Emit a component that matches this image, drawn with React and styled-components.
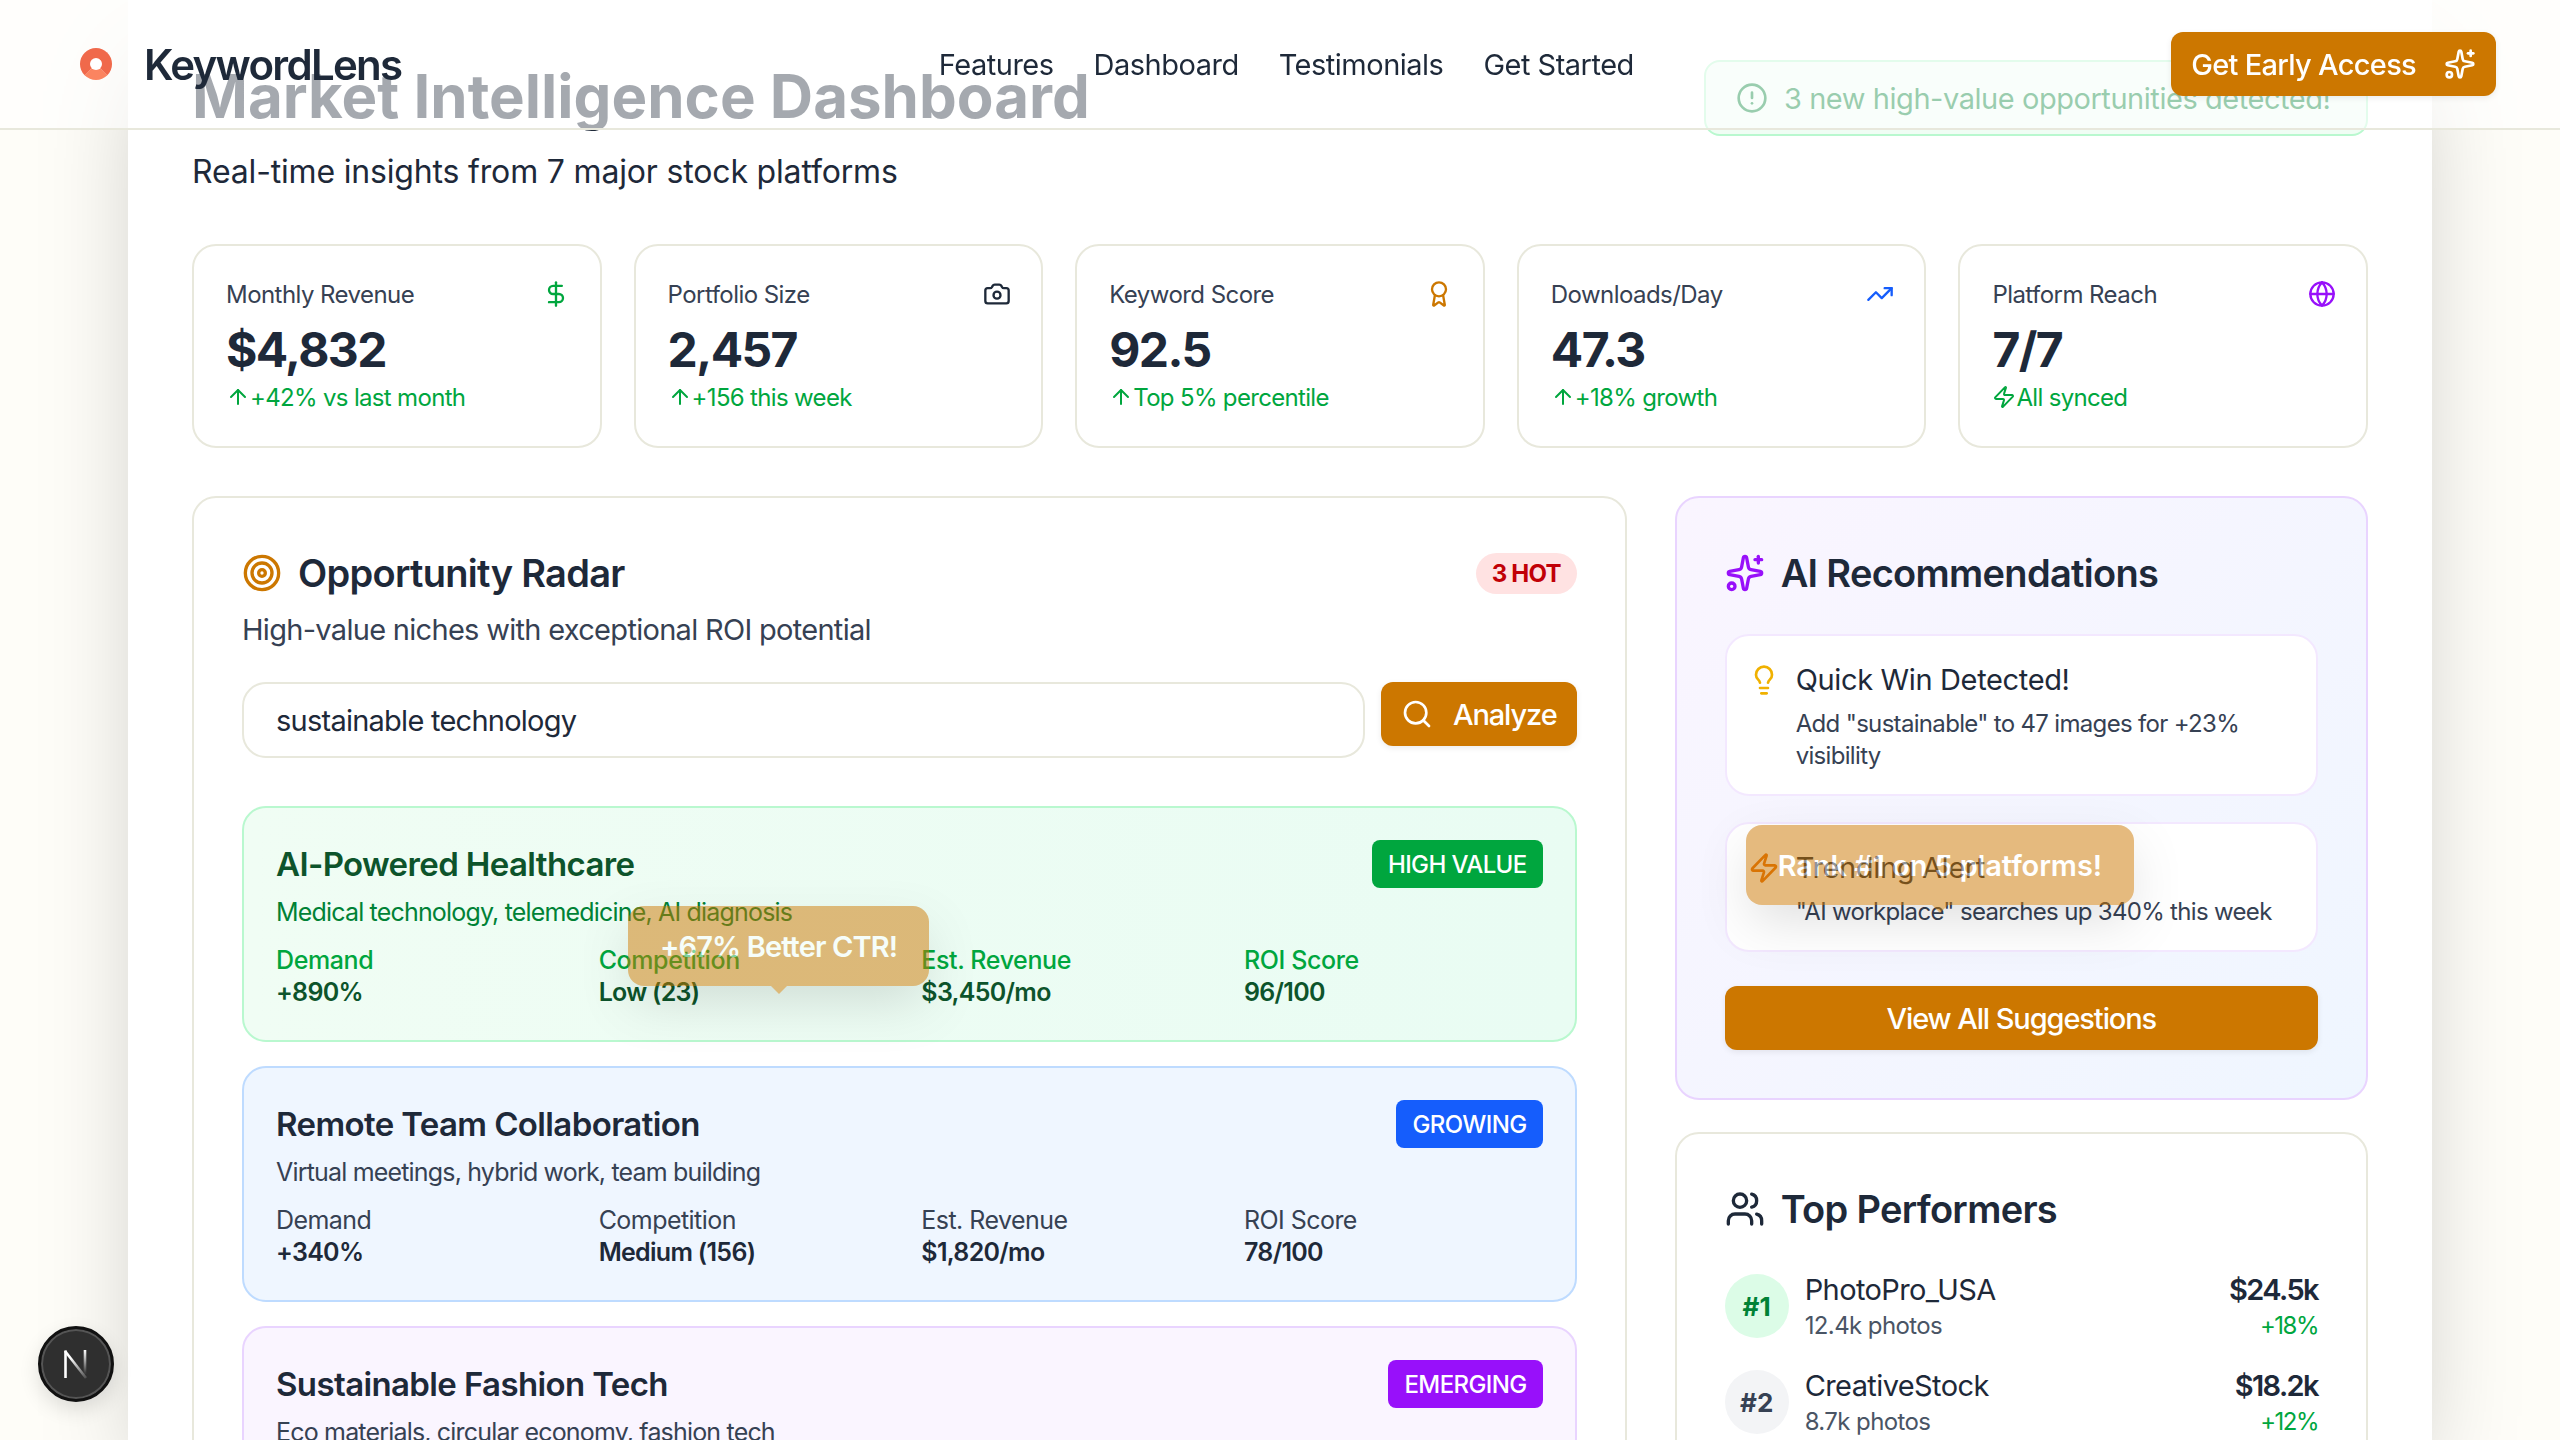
import styled, { createGlobalStyle } from "styled-components";
import {
  ArrowUp,
  Award,
  Camera,
  CircleAlert,
  DollarSign,
  Globe,
  Lightbulb,
  Search,
  Sparkles,
  Target,
  TrendingUp,
  Users,
  Zap,
} from "lucide-react";

const GlobalStyle = createGlobalStyle`
  * { box-sizing: border-box; }
  html, body { margin: 0; height: 100%; }
  body {
    background: #fefdf8;
    color: #1e2939;
    font-family: Inter, "Noto Sans", sans-serif;
    overflow: hidden;
  }
`;

const amber = "#cc7700";

const stats = [
  { label: "Monthly Revenue", value: "$4,832", change: "+42% vs last month", Icon: DollarSign, color: "#00a63e" },
  { label: "Portfolio Size", value: "2,457", change: "+156 this week", Icon: Camera, color: "#1e2939" },
  { label: "Keyword Score", value: "92.5", change: "Top 5% percentile", Icon: Award, color: amber },
  { label: "Downloads/Day", value: "47.3", change: "+18% growth", Icon: TrendingUp, color: "#155dfc" },
  { label: "Platform Reach", value: "7/7", change: "All synced", Icon: Globe, color: "#9810fa", ChangeIcon: Zap },
];

const tones = {
  green: { bg: "linear-gradient(to right, #f0fdf4, #e9fcf3)", border: "#b9f8cf", title: "#0d542b", desc: "#008236", label: "#00a63e", value: "#0d542b", badge: "#00a63e" },
  blue: { bg: "#eff6ff", border: "#bedbff", title: "#1e2939", desc: "#364153", label: "#364153", value: "#1e2939", badge: "#155dfc" },
  purple: { bg: "#faf5ff", border: "#e9d4ff", title: "#1e2939", desc: "#364153", label: "#364153", value: "#1e2939", badge: "#9810fa" },
};

const niches = [
  {
    tone: "green",
    title: "AI-Powered Healthcare",
    badge: "HIGH VALUE",
    desc: "Medical technology, telemedicine, AI diagnosis",
    metrics: [["Demand", "+890%"], ["Competition", "Low (23)"], ["Est. Revenue", "$3,450/mo"], ["ROI Score", "96/100"]],
    tip: "+67% Better CTR!",
  },
  {
    tone: "blue",
    title: "Remote Team Collaboration",
    badge: "GROWING",
    desc: "Virtual meetings, hybrid work, team building",
    metrics: [["Demand", "+340%"], ["Competition", "Medium (156)"], ["Est. Revenue", "$1,820/mo"], ["ROI Score", "78/100"]],
  },
  {
    tone: "purple",
    title: "Sustainable Fashion Tech",
    badge: "EMERGING",
    desc: "Eco materials, circular economy, fashion tech",
    metrics: [],
  },
];

const performers = [
  { rank: "#1", name: "PhotoPro_USA", photos: "12.4k photos", money: "$24.5k", growth: "+18%", top: true },
  { rank: "#2", name: "CreativeStock", photos: "8.7k photos", money: "$18.2k", growth: "+12%" },
];

const Nav = styled.nav`
  position: fixed;
  top: 0;
  left: 0;
  right: 0;
  z-index: 20;
  height: 130px;
  padding: 0 64px 0 80px;
  display: flex;
  align-items: center;
  justify-content: space-between;
  background: rgba(255, 255, 255, 0.6);
  border-bottom: 2px solid #e8e8dc;
`;

const Brand = styled.div`
  display: flex;
  align-items: center;
  gap: 32px;
  font-size: 42px;
  font-weight: 600;
  letter-spacing: -1.7px;
  color: #1e2939;
`;

const LogoMark = styled.span`
  width: 32px;
  height: 32px;
  border-radius: 50%;
  border: 10px solid #f0694b;
  border-bottom-color: #fb8460;
  background: #fff;
`;

const NavLinks = styled.div`
  display: flex;
  gap: 40px;
  font-size: 29px;
  letter-spacing: -0.5px;
  color: #1e2939;
`;

const PrimaryButton = styled.button`
  display: flex;
  align-items: center;
  justify-content: center;
  gap: ${({ $gap }) => $gap || 20}px;
  height: 64px;
  width: ${({ $full }) => ($full ? "100%" : "auto")};
  margin-top: ${({ $mt }) => $mt || 0}px;
  padding: 0 20px;
  border: 0;
  border-radius: 12px;
  background: ${amber};
  color: #fff;
  font-family: inherit;
  font-size: 29px;
  font-weight: 500;
  letter-spacing: ${({ $spacing }) => $spacing ?? -1.1}px;
  box-shadow: 0 2px 6px rgba(0, 0, 0, 0.08);
  flex-shrink: 0;
`;

const Page = styled.main`
  width: 2304px;
  height: 100vh;
  margin: 0 auto;
  padding: 60px 64px 0;
  background: #fff;
  box-shadow: 0 50px 100px -24px rgba(0, 0, 0, 0.25);
  overflow: hidden;
`;

const Header = styled.header`
  display: flex;
  justify-content: space-between;
  align-items: flex-start;
  margin-bottom: 48px;
`;

const Title = styled.h1`
  margin: 0;
  font-size: 60px;
  line-height: 72px;
  font-weight: 700;
  color: #1e2939;
`;

const Subtitle = styled.p`
  margin: 16px 0 0;
  font-size: 32px;
  line-height: 48px;
  letter-spacing: -0.17px;
  color: #1e2939;
`;

const Alert = styled.div`
  display: flex;
  align-items: center;
  gap: 16px;
  width: 664px;
  height: 76px;
  padding: 0 32px 0 30px;
  border: 2px solid #b9f8cf;
  border-radius: 16px;
  background: #f0fdf4;
  color: #008236;
  font-size: 29px;
  letter-spacing: -0.45px;
  white-space: nowrap;
`;

const StatsGrid = styled.section`
  display: grid;
  grid-template-columns: repeat(5, 1fr);
  gap: 32px;
  margin-bottom: 48px;
`;

const StatCard = styled.article`
  height: 204px;
  padding: 28px 30px 0 32px;
  border: 2px solid #e8e8dc;
  border-radius: 24px;
  background: #fff;
`;

const StatTop = styled.div`
  display: flex;
  align-items: center;
  justify-content: space-between;
  height: 40px;
  font-size: 24px;
  letter-spacing: -0.55px;
  color: #364153;
`;

const StatValue = styled.div`
  margin-top: 8px;
  font-size: 48px;
  line-height: 56px;
  font-weight: 700;
  letter-spacing: -1.6px;
  color: #1e2939;
`;

const StatChange = styled.div`
  display: flex;
  align-items: center;
  margin-top: 3px;
  height: 32px;
  font-size: 24px;
  letter-spacing: -0.67px;
  color: #00a63e;
`;

const Columns = styled.div`
  display: grid;
  grid-template-columns: repeat(3, 1fr);
  gap: 48px;
  align-items: start;
`;

const Panel = styled.section`
  grid-column: span ${({ $span }) => $span || 1};
  padding: 48px;
  border: 2px solid #e8e8dc;
  border-radius: 24px;
  background: #fff;
`;

const SidePanel = styled(Panel)`
  border-color: #e9d4ff;
  background: linear-gradient(135deg, #faf5ff, #eff6ff);
`;

const SideColumn = styled.div`
  display: flex;
  flex-direction: column;
  gap: 32px;
`;

const PanelHeader = styled.div`
  display: flex;
  align-items: center;
  justify-content: space-between;
  height: 54px;
  margin-bottom: ${({ $mb }) => $mb || 0}px;
`;

const PanelTitle = styled.h2`
  display: flex;
  align-items: center;
  gap: 16px;
  margin: 0;
  font-size: 38px;
  font-weight: 600;
  letter-spacing: -0.7px;
  color: #1e2939;
`;

const HotBadge = styled.span`
  display: flex;
  align-items: center;
  height: 41px;
  padding: 0 16px;
  border-radius: 21px;
  background: #ffe2e2;
  color: #c10007;
  font-size: 24px;
  font-weight: 700;
  letter-spacing: -0.8px;
`;

const PanelSub = styled.p`
  margin: 6px 0 28px;
  font-size: 29px;
  line-height: 48px;
  letter-spacing: -0.7px;
  color: #364153;
`;

const SearchRow = styled.div`
  display: flex;
  align-items: flex-start;
  gap: 16px;
  margin-bottom: 48px;
`;

const SearchInput = styled.input`
  flex: 1;
  height: 76px;
  padding: 0 32px;
  border: 2px solid #e8e8dc;
  border-radius: 24px;
  outline: none;
  background: #fff;
  color: #1e2939;
  font-family: inherit;
  font-size: 29px;
  letter-spacing: -0.75px;
`;

const NicheList = styled.div`
  display: flex;
  flex-direction: column;
  gap: 24px;
`;

const NicheCard = styled.article`
  position: relative;
  padding: 32px;
  min-height: 236px;
  border: 2px solid ${({ $tone }) => tones[$tone].border};
  border-radius: 24px;
  background: ${({ $tone }) => tones[$tone].bg};
`;

const NicheHead = styled.div`
  display: flex;
  align-items: center;
  justify-content: space-between;
  height: 48px;
`;

const NicheTitle = styled.h3`
  margin: 0;
  font-size: 33px;
  font-weight: 600;
  letter-spacing: -0.62px;
  color: ${({ $tone }) => tones[$tone].title};
`;

const NicheBadge = styled.span`
  display: flex;
  align-items: center;
  height: 48px;
  padding: 0 16px;
  border-radius: 8px;
  background: ${({ $tone }) => tones[$tone].badge};
  color: #fff;
  font-size: 24px;
  font-weight: 500;
  letter-spacing: -0.6px;
`;

const NicheDesc = styled.p`
  margin: 6px 0 14px;
  font-size: 25px;
  line-height: 36px;
  letter-spacing: -0.82px;
  color: ${({ $tone }) => tones[$tone].desc};
`;

const Metrics = styled.div`
  display: grid;
  grid-template-columns: repeat(4, 1fr);
  gap: 24px;
`;

const MetricLabel = styled.div`
  font-size: 25px;
  line-height: 32px;
  font-weight: ${({ $tone }) => ($tone === "green" ? 500 : 400)};
  letter-spacing: ${({ $tone }) => ($tone === "green" ? -0.4 : -0.55)}px;
  color: ${({ $tone }) => tones[$tone].label};
`;

const MetricValue = styled.div`
  font-size: 25px;
  line-height: 32px;
  font-weight: 600;
  letter-spacing: -0.7px;
  color: ${({ $tone }) => tones[$tone].value};
`;

const Tip = styled.div`
  position: absolute;
  left: ${({ $left }) => $left}px;
  top: ${({ $top }) => $top}px;
  z-index: 5;
  height: 80px;
  padding: 0 32px;
  display: flex;
  align-items: center;
  border-radius: 16px;
  background: ${amber};
  color: #fff;
  font-size: 29px;
  font-weight: 600;
  letter-spacing: ${({ $spacing }) => $spacing}px;
  white-space: nowrap;
  opacity: 0.5;
  box-shadow: 0 20px 50px -6px rgba(0, 0, 0, 0.25);

  &::after {
    content: "";
    position: absolute;
    left: 50%;
    bottom: -8px;
    margin-left: -8px;
    border-left: 8px solid transparent;
    border-right: 8px solid transparent;
    border-top: 8px solid ${amber};
  }
`;

const Hint = styled.article`
  position: relative;
  display: flex;
  gap: 16px;
  padding: 20px 20px 22px 21px;
  margin-bottom: 26px;
  border: 2px solid #f3e8ff;
  border-radius: 24px;
  background: #fff;
`;

const HintIcon = styled.span`
  flex: 0 0 32px;
  height: 48px;
  display: flex;
  align-items: center;
  color: ${({ $color }) => $color};
`;

const HintTitle = styled.div`
  font-size: 29px;
  line-height: 48px;
  font-weight: 400;
  letter-spacing: -0.35px;
  color: #1e2939;
`;

const HintText = styled.p`
  margin: 4px 0 0;
  font-size: 24px;
  line-height: 32px;
  letter-spacing: -0.68px;
  color: #364153;
`;

const PerformerList = styled.div`
  display: flex;
  flex-direction: column;
  gap: 24px;
`;

const Performer = styled.div`
  display: flex;
  align-items: flex-start;
  gap: 16px;
`;

const Rank = styled.span`
  flex: 0 0 64px;
  height: 64px;
  margin-top: 2px;
  display: flex;
  align-items: center;
  justify-content: center;
  border-radius: 50%;
  background: ${({ $top }) => ($top ? "#dcfce7" : "#f3f4f6")};
  color: ${({ $top }) => ($top ? "#008236" : "#364153")};
  font-size: 26px;
  font-weight: 700;
`;

const PerformerInfo = styled.div`
  flex: 1;
`;

const PerformerName = styled.div`
  font-size: 29px;
  line-height: 36px;
  letter-spacing: -0.6px;
  color: #1e2939;
`;

const PerformerMeta = styled.div`
  font-size: 24px;
  line-height: 36px;
  letter-spacing: -0.6px;
  color: #4a5565;
`;

const PerformerRight = styled.div`
  text-align: right;
`;

const PerformerMoney = styled.div`
  font-size: 29px;
  line-height: 36px;
  font-weight: 600;
  letter-spacing: -1.6px;
  color: #1e2939;
`;

const PerformerGrowth = styled.div`
  font-size: 24px;
  line-height: 36px;
  letter-spacing: -1.5px;
  color: #00a63e;
`;

const DevBadge = styled.div`
  position: fixed;
  left: 38px;
  bottom: 38px;
  z-index: 30;
  width: 76px;
  height: 76px;
  display: flex;
  align-items: center;
  justify-content: center;
  border-radius: 50%;
  background: #2f2f2f;
  border: 3px solid #111;
  box-shadow: inset 0 0 0 2px #555, 0 8px 20px rgba(0, 0, 0, 0.12);
`;

const NextMark = () => (
  <svg width="28" height="30" viewBox="0 0 28 30" fill="none">
    <defs>
      <linearGradient id="nextFade" gradientUnits="userSpaceOnUse" x1="0" y1="1" x2="0" y2="24">
        <stop offset="0" stopColor="#fff" />
        <stop offset="1" stopColor="#fff" stopOpacity="0.05" />
      </linearGradient>
      <linearGradient id="nextSlash" gradientUnits="userSpaceOnUse" x1="10" y1="8" x2="24" y2="29">
        <stop offset="0" stopColor="#fff" />
        <stop offset="1" stopColor="#fff" stopOpacity="0.15" />
      </linearGradient>
    </defs>
    <path d="M3.5 29V1.5" stroke="#fff" strokeWidth="2.6" />
    <path d="M3 2l21 27" stroke="url(#nextSlash)" strokeWidth="2.6" />
    <path d="M23 1v24" stroke="url(#nextFade)" strokeWidth="2.6" />
  </svg>
);

const App = () => {
  return (
    <>
      <GlobalStyle />
      <Nav>
        <Brand>
          <LogoMark />
          KeywordLens
        </Brand>
        <NavLinks>
          <span>Features</span>
          <span>Dashboard</span>
          <span>Testimonials</span>
          <span>Get Started</span>
        </NavLinks>
        <PrimaryButton $gap={28} $spacing={-0.7}>
          Get Early Access
          <Sparkles size={32} />
        </PrimaryButton>
      </Nav>

      <Page>
        <Header>
          <div>
            <Title>Market Intelligence Dashboard</Title>
            <Subtitle>Real-time insights from 7 major stock platforms</Subtitle>
          </div>
          <Alert>
            <CircleAlert size={32} />
            3 new high-value opportunities detected!
          </Alert>
        </Header>

        <StatsGrid>
          {stats.map(({ label, value, change, Icon, color, ChangeIcon = ArrowUp }) => (
            <StatCard key={label}>
              <StatTop>
                {label}
                <Icon size={28} color={color} />
              </StatTop>
              <StatValue>{value}</StatValue>
              <StatChange>
                <ChangeIcon size={24} />
                {change}
              </StatChange>
            </StatCard>
          ))}
        </StatsGrid>

        <Columns>
          <Panel $span={2}>
            <PanelHeader>
              <PanelTitle>
                <Target size={40} color={amber} />
                Opportunity Radar
              </PanelTitle>
              <HotBadge>3 HOT</HotBadge>
            </PanelHeader>
            <PanelSub>High-value niches with exceptional ROI potential</PanelSub>
            <SearchRow>
              <SearchInput readOnly value="sustainable technology" />
              <PrimaryButton>
                <Search size={32} />
                Analyze
              </PrimaryButton>
            </SearchRow>
            <NicheList>
              {niches.map((niche) => (
                <NicheCard key={niche.title} $tone={niche.tone}>
                  <NicheHead>
                    <NicheTitle $tone={niche.tone}>{niche.title}</NicheTitle>
                    <NicheBadge $tone={niche.tone}>{niche.badge}</NicheBadge>
                  </NicheHead>
                  <NicheDesc $tone={niche.tone}>{niche.desc}</NicheDesc>
                  <Metrics>
                    {niche.metrics.map(([label, value]) => (
                      <div key={label}>
                        <MetricLabel $tone={niche.tone}>{label}</MetricLabel>
                        <MetricValue $tone={niche.tone}>{value}</MetricValue>
                      </div>
                    ))}
                  </Metrics>
                  {niche.tip && (
                    <Tip $left={384} $top={98} $spacing={-0.9}>
                      {niche.tip}
                    </Tip>
                  )}
                </NicheCard>
              ))}
            </NicheList>
          </Panel>

          <SideColumn>
            <SidePanel>
              <PanelHeader $mb={34}>
                <PanelTitle>
                  <Sparkles size={40} color="#9810fa" />
                  AI Recommendations
                </PanelTitle>
              </PanelHeader>
              <Hint>
                <HintIcon $color="#f0b100">
                  <Lightbulb size={32} />
                </HintIcon>
                <div>
                  <HintTitle>Quick Win Detected!</HintTitle>
                  <HintText>Add "sustainable" to 47 images for +23% visibility</HintText>
                </div>
              </Hint>
              <Hint>
                <HintIcon $color="#e8710a">
                  <Zap size={32} />
                </HintIcon>
                <div>
                  <HintTitle>Trending Alert</HintTitle>
                  <HintText>"AI workplace" searches up 340% this week</HintText>
                </div>
                <Tip $left={19} $top={1} $spacing={-0.1}>
                  Rank #1 on 5 platforms!
                </Tip>
              </Hint>
              <PrimaryButton $full $mt={34}>
                View All Suggestions
              </PrimaryButton>
            </SidePanel>

            <Panel>
              <PanelHeader $mb={36}>
                <PanelTitle>
                  <Users size={40} color="#1e2939" />
                  Top Performers
                </PanelTitle>
              </PanelHeader>
              <PerformerList>
                {performers.map((p) => (
                  <Performer key={p.rank}>
                    <Rank $top={p.top}>{p.rank}</Rank>
                    <PerformerInfo>
                      <PerformerName>{p.name}</PerformerName>
                      <PerformerMeta>{p.photos}</PerformerMeta>
                    </PerformerInfo>
                    <PerformerRight>
                      <PerformerMoney>{p.money}</PerformerMoney>
                      <PerformerGrowth>{p.growth}</PerformerGrowth>
                    </PerformerRight>
                  </Performer>
                ))}
              </PerformerList>
            </Panel>
          </SideColumn>
        </Columns>
      </Page>

      <DevBadge>
        <NextMark />
      </DevBadge>
    </>
  );
};

export default App;
